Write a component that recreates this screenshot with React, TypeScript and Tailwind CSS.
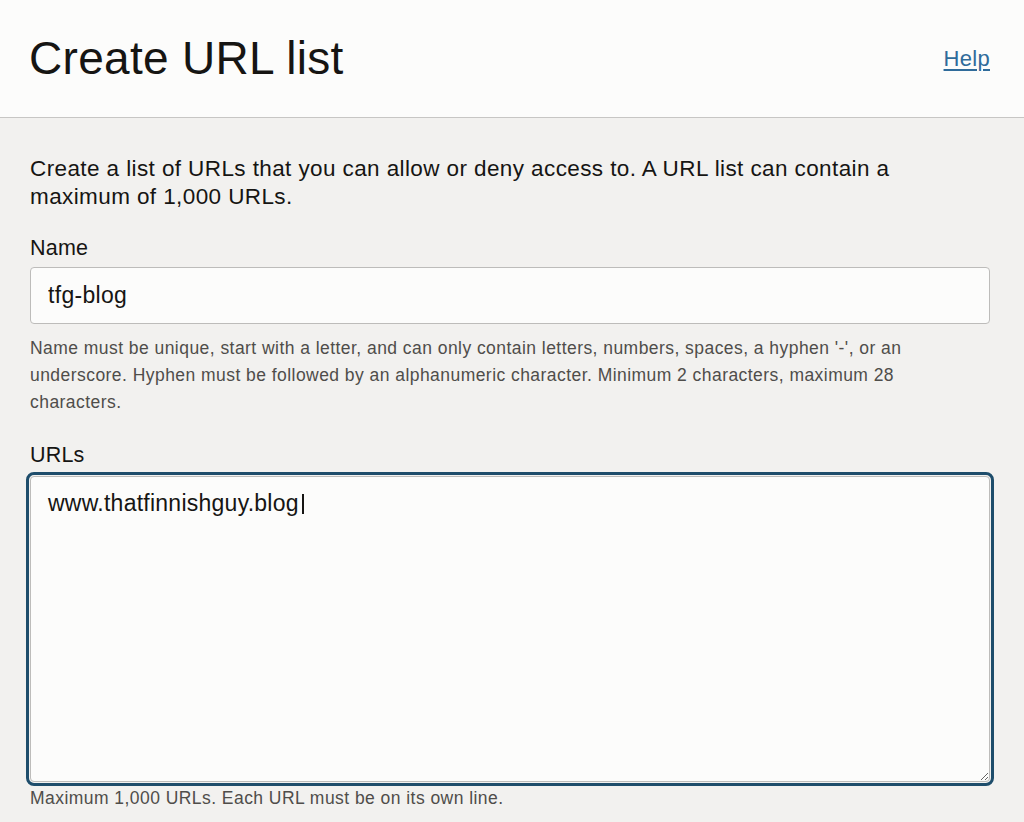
export default function App() {
  return (
    <div className="min-h-[822px] w-full bg-[#f2f1ef] font-['Liberation_Sans',Arial,sans-serif] text-[#161513]">
      <header className="flex h-[118px] items-center justify-between border-b border-[#c7c6c4] bg-[#fcfcfb] pl-[29px] pr-[34px]">
        <h1 className="pb-[2px] text-[46px] leading-none font-normal tracking-[0.3px]">Create URL list</h1>
        <a href="#" className="text-[22px] tracking-[0.3px] text-[#2f6b9a] underline underline-offset-[3px]">
          Help
        </a>
      </header>

      <main className="pl-[30px] pr-[34px] pt-[37px]">
        <p className="text-[22.5px] leading-[28px] tracking-[0.4px]">
          Create a list of URLs that you can allow or deny access to. A URL list can contain a maximum of 1,000 URLs.
        </p>

        <div className="mt-[23px] flex flex-col">
          <label className="text-[21.5px] leading-[28px] tracking-[0.2px]">Name</label>
          <input
            readOnly
            value="tfg-blog"
            className="mt-[5px] h-[57px] w-full rounded-[4px] border border-[#bdbcba] bg-[#fcfcfb] px-[17px] text-[23px] tracking-[0.3px] text-[#161513] outline-none"
          />
          <p className="mt-[11px] max-w-[920px] text-[17.5px] leading-[27px] tracking-[0.45px] text-[#4f4d4a]">
            Name must be unique, start with a letter, and can only contain letters, numbers, spaces, a hyphen '-', or an underscore. Hyphen must be followed by an alphanumeric character. Minimum 2 characters, maximum 28 characters.
          </p>
        </div>

        <div className="mt-[25px] flex flex-col">
          <label className="text-[21.5px] leading-[28px] tracking-[0.2px]">URLs</label>
          <div className="relative mt-[7px]">
            <textarea
              readOnly
              value="www.thatfinnishguy.blog"
              className="block h-[306px] w-full resize-y rounded-[4px] border border-[#bdbcba] bg-[#fcfcfb] px-[17px] pt-[12px] text-[23px] leading-[28px] tracking-[0.25px] text-[#161513] outline-[3px] outline-offset-[1px] outline-[#1e4d6b] outline-solid"
            />
            <span className="absolute top-[18px] left-[272px] h-[20px] w-[1.5px] bg-[#161513]" />
          </div>
          <p className="mt-[5px] text-[17.5px] leading-[22px] tracking-[0.45px] text-[#4f4d4a]">
            Maximum 1,000 URLs. Each URL must be on its own line.
          </p>
        </div>
      </main>
    </div>
  );
}
